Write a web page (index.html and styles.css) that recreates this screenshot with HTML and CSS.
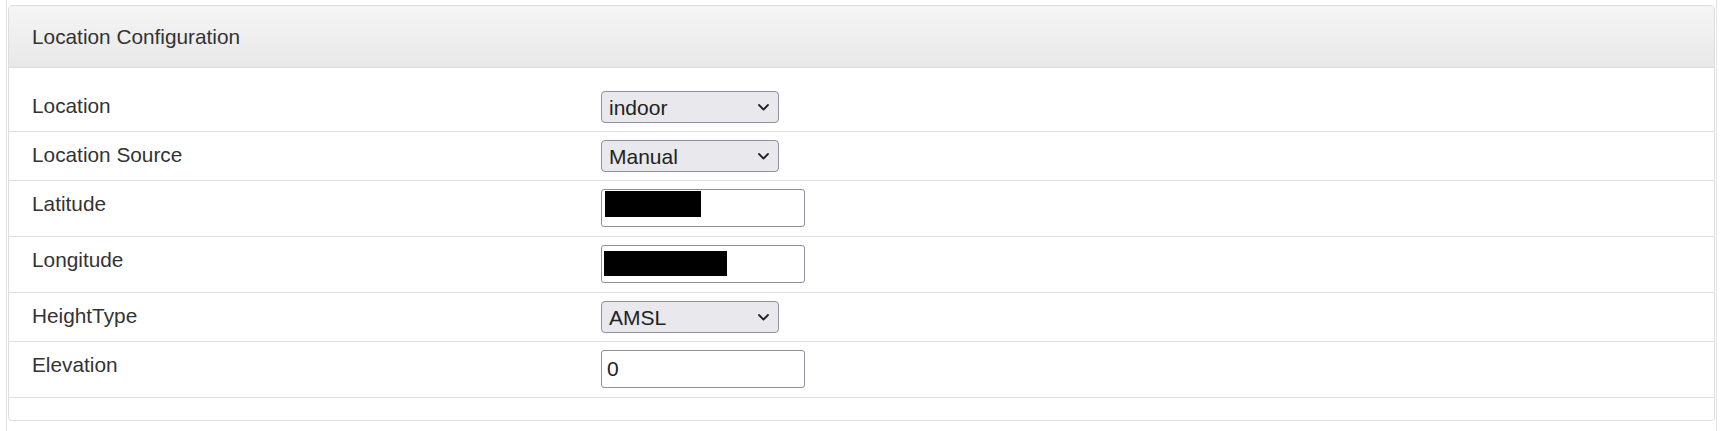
FILE: index.html
```html
<!DOCTYPE html>
<html>
<head>
<meta charset="utf-8">
<title>Location Configuration</title>
<link rel="stylesheet" href="styles.css">
</head>
<body>
<div class="frame">
  <div class="panel">
    <div class="panel-heading">Location Configuration</div>
    <div class="panel-body">
      <div class="row">
        <div class="label">Location</div>
        <div class="control">
          <div class="select-wrap">
            <select class="select"><option>indoor</option><option>outdoor</option></select>
            <svg class="chevron" width="11" height="7" viewBox="0 0 11 7"><path d="M1 1 L5.5 5.5 L10 1" fill="none" stroke="#222" stroke-width="1.8" stroke-linecap="round" stroke-linejoin="round"/></svg>
          </div>
        </div>
      </div>
      <div class="row">
        <div class="label">Location Source</div>
        <div class="control">
          <div class="select-wrap">
            <select class="select"><option>Manual</option><option>GPS</option></select>
            <svg class="chevron" width="11" height="7" viewBox="0 0 11 7"><path d="M1 1 L5.5 5.5 L10 1" fill="none" stroke="#222" stroke-width="1.8" stroke-linecap="round" stroke-linejoin="round"/></svg>
          </div>
        </div>
      </div>
      <div class="row">
        <div class="label">Latitude</div>
        <div class="control">
          <div class="input-wrap">
            <input class="input" type="text" value="">
            <span class="redact redact-lat"></span>
          </div>
        </div>
      </div>
      <div class="row">
        <div class="label">Longitude</div>
        <div class="control">
          <div class="input-wrap">
            <input class="input" type="text" value="">
            <span class="redact redact-lon"></span>
          </div>
        </div>
      </div>
      <div class="row">
        <div class="label">HeightType</div>
        <div class="control">
          <div class="select-wrap">
            <select class="select"><option>AMSL</option><option>AGL</option></select>
            <svg class="chevron" width="11" height="7" viewBox="0 0 11 7"><path d="M1 1 L5.5 5.5 L10 1" fill="none" stroke="#222" stroke-width="1.8" stroke-linecap="round" stroke-linejoin="round"/></svg>
          </div>
        </div>
      </div>
      <div class="row">
        <div class="label">Elevation</div>
        <div class="control">
          <div class="input-wrap">
            <input class="input" type="text" value="0">
          </div>
        </div>
      </div>
    </div>
  </div>
</div>
</body>
</html>
```

FILE: styles.css
```css
html, body {
  margin: 0;
  padding: 0;
  background: #fff;
}

body {
  font-family: "Liberation Sans", Arial, sans-serif;
  color: #333;
}

.frame {
  box-sizing: border-box;
  margin-left: 6px;
  width: 1711px;
  min-height: 100vh;
  padding: 5px 1px 0 1px;
  border-left: 1px solid #e3e3e3;
  border-right: 1px solid #e3e3e3;
}

.panel {
  border: 1px solid #ddd;
  border-radius: 4px;
  background: #fff;
}

.panel-heading {
  height: 61px;
  display: flex;
  align-items: center;
  padding-left: 23px;
  font-size: 20.8px;
  color: #333;
  background: linear-gradient(to bottom, #f5f5f5 0%, #e8e8e8 100%);
  border-bottom: 1px solid #ddd;
  border-radius: 3px 3px 0 0;
}

.panel-body {
  padding: 15px 0 22px 0;
}

.row {
  display: grid;
  grid-template-columns: 569px 1fr;
  align-items: start;
  padding: 8px 0 8px 23px;
  border-bottom: 1px solid #ddd;
}

.label {
  font-size: 20.8px;
  line-height: 30px;
  color: #333;
}

.select-wrap {
  position: relative;
  width: 178px;
  height: 32px;
}

.select {
  appearance: none;
  -webkit-appearance: none;
  box-sizing: border-box;
  width: 178px;
  height: 32px;
  margin: 0;
  padding: 0 7px;
  border: 1px solid #8f8f9d;
  border-radius: 4px;
  background: #e9e9ed;
  font-family: "Liberation Sans", Arial, sans-serif;
  font-size: 21px;
  color: #222;
}

.chevron {
  position: absolute;
  right: 10px;
  top: 13px;
  pointer-events: none;
}

.input-wrap {
  position: relative;
  width: 204px;
  height: 39px;
}

.input {
  box-sizing: border-box;
  width: 204px;
  height: 38px;
  margin: 0;
  padding: 0 5px;
  border: 1px solid #8f8f9d;
  border-radius: 3px;
  background: #fff;
  font-family: "Liberation Sans", Arial, sans-serif;
  font-size: 21px;
  color: #222;
  outline: none;
}

.redact {
  position: absolute;
  background: #000;
}

.redact-lat {
  left: 4px;
  top: 2px;
  width: 96px;
  height: 26px;
}

.redact-lon {
  left: 3px;
  top: 6px;
  width: 123px;
  height: 25px;
}
```
